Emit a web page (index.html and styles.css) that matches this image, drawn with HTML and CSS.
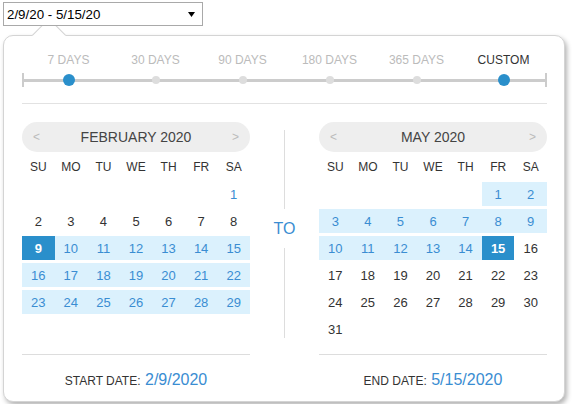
FILE: index.html
```html
<!DOCTYPE html>
<html>
<head>
<meta charset="utf-8">
<link rel="stylesheet" href="styles.css">
</head>
<body>
<div class="page">
  <div class="select">
    <span>2/9/20 - 5/15/20</span>
    <svg class="arrow" width="7" height="5" viewBox="0 0 7 5"><path d="M0 0H7L3.5 5Z" fill="#000"/></svg>
  </div>
  <div class="popup">
    <div class="caret"></div>
    <div class="labels">
      <span>7 DAYS</span><span>30 DAYS</span><span>90 DAYS</span><span>180 DAYS</span><span>365 DAYS</span><span class="active">CUSTOM</span>
    </div>
    <div class="track">
      <span class="dot active"></span><span class="dot"></span><span class="dot"></span><span class="dot"></span><span class="dot"></span><span class="dot active"></span>
    </div>
    <div class="sep"></div>
    <div class="cals">
      <div class="cal">
        <div class="head"><span class="nav">&lt;</span><span>FEBRUARY 2020</span><span class="nav">&gt;</span></div>
        <div class="grid">
          <span class="wd">SU</span><span class="wd">MO</span><span class="wd">TU</span><span class="wd">WE</span><span class="wd">TH</span><span class="wd">FR</span><span class="wd">SA</span>
          <span></span><span></span><span></span><span></span><span></span><span></span><span class="blue">1</span>
          <span>2</span><span>3</span><span>4</span><span>5</span><span>6</span><span>7</span><span>8</span>
          <span class="sel">9</span><span class="in">10</span><span class="in">11</span><span class="in">12</span><span class="in">13</span><span class="in">14</span><span class="in">15</span>
          <span class="in">16</span><span class="in">17</span><span class="in">18</span><span class="in">19</span><span class="in">20</span><span class="in">21</span><span class="in">22</span>
          <span class="in">23</span><span class="in">24</span><span class="in">25</span><span class="in">26</span><span class="in">27</span><span class="in">28</span><span class="in">29</span>
        </div>
      </div>
      <div class="mid">
        <div class="vline top"></div>
        <div class="to">TO</div>
        <div class="vline bottom"></div>
      </div>
      <div class="cal">
        <div class="head"><span class="nav">&lt;</span><span>MAY 2020</span><span class="nav">&gt;</span></div>
        <div class="grid">
          <span class="wd">SU</span><span class="wd">MO</span><span class="wd">TU</span><span class="wd">WE</span><span class="wd">TH</span><span class="wd">FR</span><span class="wd">SA</span>
          <span></span><span></span><span></span><span></span><span></span><span class="in">1</span><span class="in">2</span>
          <span class="in">3</span><span class="in">4</span><span class="in">5</span><span class="in">6</span><span class="in">7</span><span class="in">8</span><span class="in">9</span>
          <span class="in">10</span><span class="in">11</span><span class="in">12</span><span class="in">13</span><span class="in">14</span><span class="sel">15</span><span>16</span>
          <span>17</span><span>18</span><span>19</span><span>20</span><span>21</span><span>22</span><span>23</span>
          <span>24</span><span>25</span><span>26</span><span>27</span><span>28</span><span>29</span><span>30</span>
          <span>31</span>
        </div>
      </div>
    </div>
    <div class="foot">
      <div class="fcell"><span class="flabel">START DATE:</span> <span class="fval">2/9/2020</span></div>
      <div></div>
      <div class="fcell"><span class="flabel">END DATE:</span> <span class="fval">5/15/2020</span></div>
    </div>
  </div>
</div>
</body>
</html>
```
FILE: styles.css
```css
* { box-sizing: border-box; }
body {
  margin: 0;
  font-family: "Liberation Sans", Arial, sans-serif;
  color: #333;
  background: #fff;
}
.page { padding: 2px 3px; }
.select {
  position: relative;
  z-index: 2;
  width: 200px;
  height: 24px;
  border: 1px solid #a9a9a9;
  background: #fff;
  display: flex;
  align-items: center;
  justify-content: space-between;
  padding: 0 7px 0 3px;
  font-size: 13.33px;
  color: #000;
}
.arrow { display: block; }
.popup {
  position: relative;
  margin-top: 9px;
  width: 562px;
  border: 1px solid #d4d4d4;
  border-radius: 10px;
  box-shadow: 2px 3px 5px rgba(0, 0, 0, 0.3);
  padding: 17px 17px 10px 18px;
  background: #fff;
}
.caret {
  position: absolute;
  left: 33px;
  top: -13px;
  width: 24px;
  height: 24px;
  transform: rotate(45deg);
  border-top: 1px solid #d4d4d4;
  border-left: 1px solid #d4d4d4;
  background: #fff;
}
.labels {
  position: relative;
  display: grid;
  grid-template-columns: repeat(6, 87px);
  padding-left: 3px;
  font-size: 12px;
  line-height: 14px;
  color: #bbb;
  text-align: center;
}
.labels .active { color: #333; }
.track {
  display: grid;
  grid-template-columns: repeat(6, 87px);
  padding-left: 3px;
  height: 14px;
  margin-top: 6px;
  align-items: center;
  justify-items: center;
  background:
    linear-gradient(#ccc, #ccc) center / 100% 3px no-repeat,
    linear-gradient(#ccc, #ccc) left center / 2px 100% no-repeat,
    linear-gradient(#ccc, #ccc) right center / 2px 100% no-repeat;
}
.dot {
  width: 8px;
  height: 8px;
  border-radius: 50%;
  background: #ddd;
}
.dot.active {
  width: 12px;
  height: 12px;
  background: #2a8fcb;
}
.sep {
  margin-top: 16px;
  border-top: 1px solid #e2e2e2;
}
.cals {
  display: grid;
  grid-template-columns: 228px 1fr 228px;
  margin-top: 18px;
}
.cal { display: flex; flex-direction: column; }
.head {
  height: 30px;
  border-radius: 15px;
  background: #eee;
  display: flex;
  align-items: center;
  justify-content: space-between;
  padding: 0 11px;
  font-size: 14px;
  color: #444;
}
.nav { color: #bbb; font-size: 12px; }
.grid {
  margin-top: 3px;
  display: grid;
  grid-template-columns: repeat(7, 1fr);
  grid-auto-rows: 24px;
  row-gap: 3px;
  font-size: 13px;
}
.grid span {
  display: flex;
  align-items: center;
  justify-content: center;
}
.grid .wd { font-size: 12px; color: #333; }
.grid .blue { color: #3a8dd2; }
.grid .in { background: #dbf1fd; color: #3a8dd2; }
.grid .sel { background: #2a8fcb; color: #fff; font-weight: bold; }
.mid {
  display: flex;
  flex-direction: column;
  align-items: center;
  padding-top: 8px;
}
.vline { width: 1px; background: #ddd; }
.vline.top { height: 79px; }
.vline.bottom { height: 90px; }
.to {
  height: 39px;
  line-height: 39px;
  font-size: 16px;
  color: #3a8dd2;
}
.foot {
  display: grid;
  grid-template-columns: 228px 1fr 228px;
  margin-top: 13px;
}
.fcell {
  border-top: 1px solid #ddd;
  padding-top: 15px;
  text-align: center;
  line-height: 20px;
}
.flabel { font-size: 12px; color: #333; }
.fval { font-size: 16px; color: #3a8dd2; }
```
